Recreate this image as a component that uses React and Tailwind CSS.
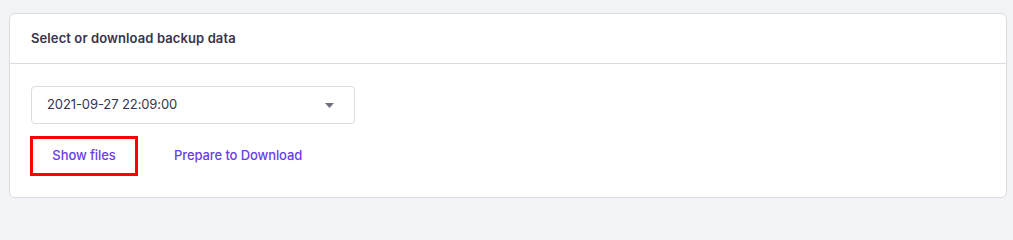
import React, { useState } from "react";

const App = () => {
  const [date] = useState("2021-09-27 22:09:00");

  return (
    <div
      className="w-full min-h-screen bg-[#f2f3f6] pt-[13px] px-[9px] pb-[8px]"
      style={{ fontFamily: "Inter, 'Noto Sans', sans-serif" }}
    >
      <div className="w-[998px] h-[185px] bg-white border border-[#dadce0] rounded-[6px]">
        <div className="h-[50px] flex items-center px-[21px] border-b border-[#dadce0]">
          <h3 className="text-[13px] font-semibold text-[#36344d] tracking-[0.1px]">
            Select or download backup data
          </h3>
        </div>

        <div className="px-[21px] pt-[22px]">
          <button className="w-[324px] h-[38px] flex items-center justify-between pl-[15px] pr-[20px] border border-[#dadce0] rounded-[4px] bg-white">
            <span className="text-[13px] text-[#36344d] tracking-[-0.1px]">{date}</span>
            <svg width="9" height="5" viewBox="0 0 9 5" className="mt-[1px]">
              <path d="M0 0h9L4.5 5z" fill="#6d7081" />
            </svg>
          </button>

          <div className="flex items-center mt-[12px]">
            <button className="w-[108px] h-[40px] border-[3px] border-[#ff0000] -ml-[1px] flex items-center justify-center text-[13px] font-medium tracking-[-0.1px] text-[#673de6]">
              Show files
            </button>
            <button className="ml-[36px] text-[13px] font-medium tracking-[-0.1px] text-[#673de6]">
              Prepare to Download
            </button>
          </div>
        </div>
      </div>
    </div>
  );
};

export default App;
